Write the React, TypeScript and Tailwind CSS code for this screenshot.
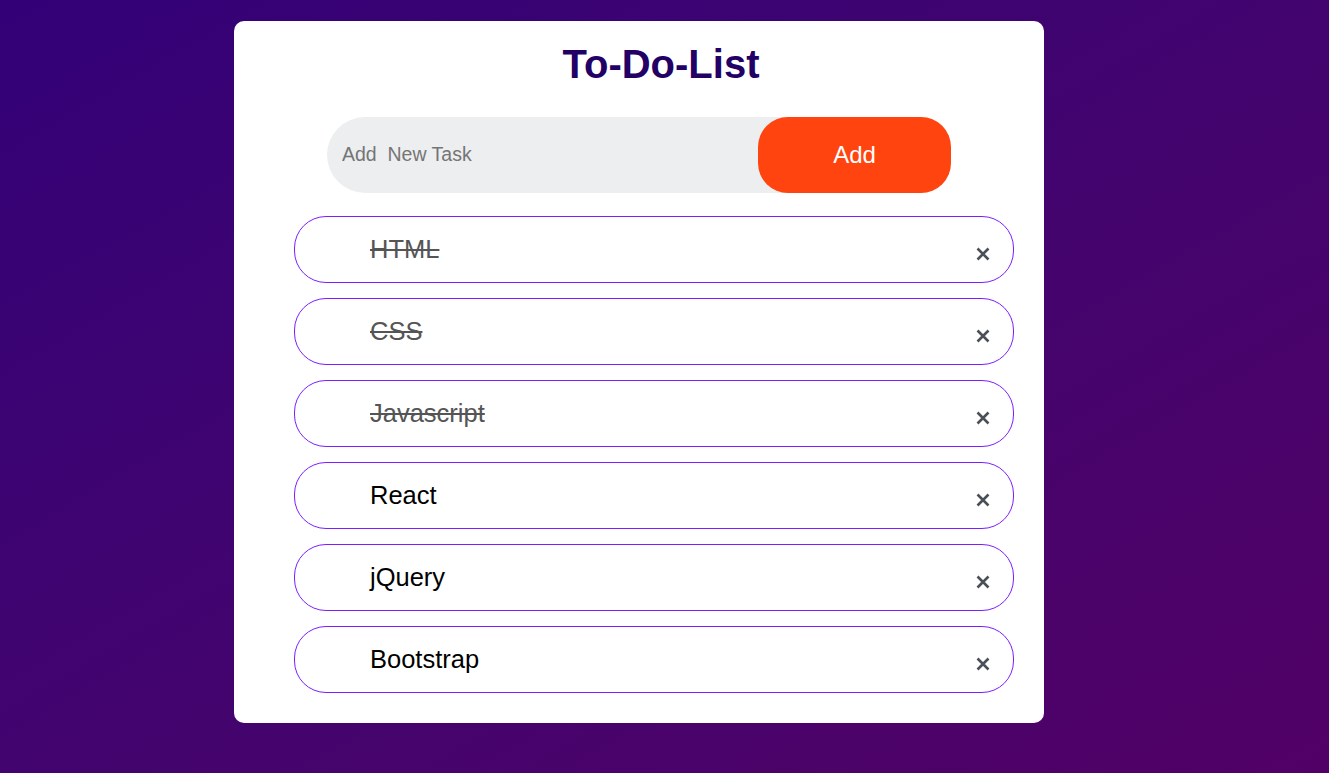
const tasks = [
  { text: "HTML", done: true },
  { text: "CSS", done: true },
  { text: "Javascript", done: true },
  { text: "React", done: false },
  { text: "jQuery", done: false },
  { text: "Bootstrap", done: false },
];

export default function App() {
  return (
    <div className="min-h-[773px] w-full bg-gradient-to-br from-[#330077] to-[#510066] pt-[21px] font-['Liberation_Sans',Arial,sans-serif]">
      <div className="ml-[234px] flex h-[702px] w-[810px] flex-col rounded-[10px] bg-white">
        <h1 className="mt-[20px] pl-[44px] text-center text-[40px] font-bold leading-[46px] text-[#230066]">
          To-Do-List
        </h1>

        <div className="mx-auto mt-[30px] flex h-[76px] w-[624px] rounded-full bg-[#edeef0]">
          <input
            className="flex-1 bg-transparent pl-[15px] text-[19.5px] text-[#333] placeholder:text-[#757575] outline-none"
            placeholder="Add  New Task"
          />
          <button className="h-full w-[193px] rounded-[30px] bg-[#ff4410] text-[24px] text-white">
            Add
          </button>
        </div>

        <ul className="ml-[60px] mt-[23px] flex w-[720px] flex-col gap-[15px]">
          {tasks.map((t) => (
            <li
              key={t.text}
              className="flex h-[67px] items-center rounded-[32px] border border-[#7b1fff] pl-[75px] pr-[22px]"
            >
              <span
                className={
                  t.done
                    ? "flex-1 text-[25.5px] text-[#555] line-through"
                    : "flex-1 text-[25.5px] text-black"
                }
              >
                {t.text}
              </span>
              <svg className="mt-[8px]" width="16" height="16" viewBox="0 0 16 16">
                <path d="M2.5 2.5L13.5 13.5M13.5 2.5L2.5 13.5" stroke="#4a5058" strokeWidth="2.6" strokeLinecap="butt" />
              </svg>
            </li>
          ))}
        </ul>
      </div>
    </div>
  );
}
